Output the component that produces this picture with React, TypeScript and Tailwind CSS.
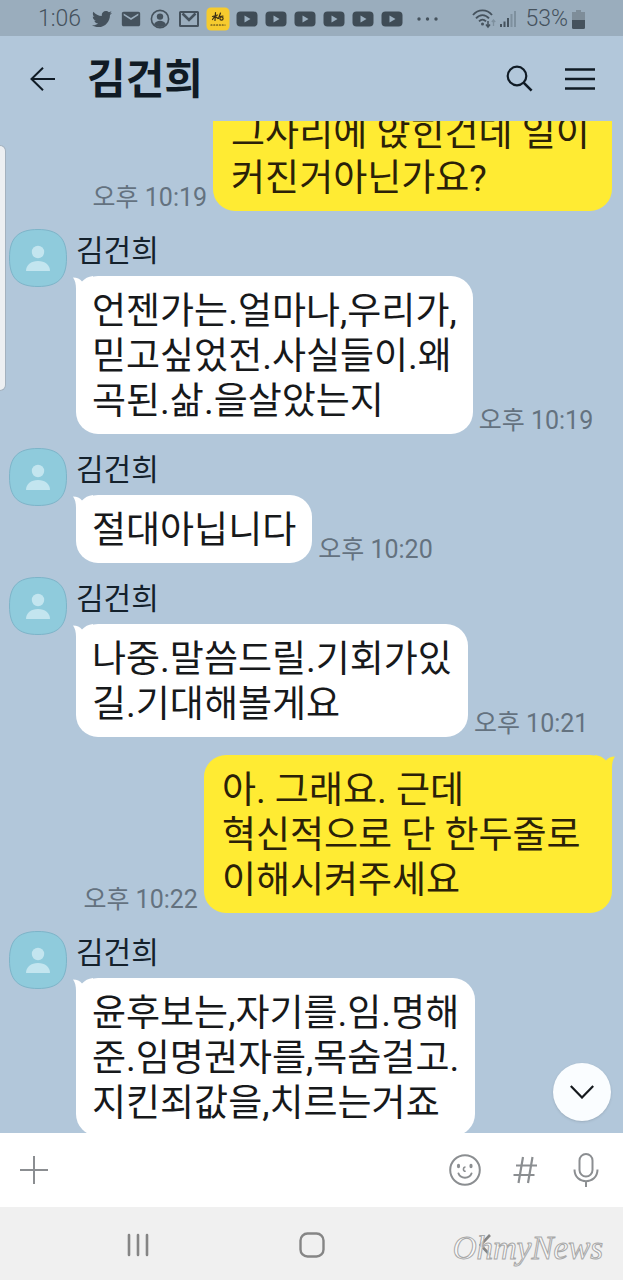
import type { ReactNode } from "react";
import { FaTwitter } from "react-icons/fa";
import { MdEmail } from "react-icons/md";

type Message = {
  mine?: boolean;
  text: string;
  time?: string;
};

const NAME = "김건희";

const messages: Message[] = [
  { mine: true, text: "그사리에 앉힌건데 일이 \n커진거아닌가요?", time: "오후 10:19" },
  { text: "언젠가는.얼마나,우리가,\n믿고싶었전.사실들이.왜\n곡된.삶.을살았는지", time: "오후 10:19" },
  { text: "절대아닙니다", time: "오후 10:20" },
  { text: "나중.말씀드릴.기회가있\n길.기대해볼게요", time: "오후 10:21" },
  { mine: true, text: "아. 그래요. 근데\n혁신적으로 단 한두줄로  \n이해시켜주세요", time: "오후 10:22" },
  { text: "윤후보는,자기를.임.명해\n준.임명권자를,목숨걸고.\n지킨죄값을,치르는거죠" },
];

function YoutubeIcon() {
  return (
    <svg viewBox="0 0 22 16" className="w-[22px] h-4">
      <rect x="0.5" y="0.5" width="21" height="15" rx="4" fill="#3f4c56" />
      <path d="M8.5 4.5l6 3.5-6 3.5z" fill="#9bafbf" />
    </svg>
  );
}

function Slot({ children }: { children: ReactNode }) {
  return <span className="flex w-[22px] shrink-0 items-center justify-center">{children}</span>;
}

function StatusBar() {
  return (
    <div className="flex h-9 shrink-0 items-center bg-[#9aadbd] px-[38px] pt-[2px] text-[#45525d]">
      <span className="w-[53px] shrink-0 text-[23px] leading-8 font-light">1:06</span>
      <div className="flex shrink-0 items-center gap-[7px]">
        <Slot><FaTwitter size={20} /></Slot>
        <Slot><MdEmail size={22} /></Slot>
        <Slot>
          <svg viewBox="0 0 20 20" className="size-5" fill="none">
            <circle cx="10" cy="10" r="8.6" stroke="currentColor" strokeWidth="1.6" />
            <circle cx="10" cy="7.6" r="3.2" fill="currentColor" />
            <path d="M4 15.5c1-2.6 3.4-3.7 6-3.7s5 1.1 6 3.7a8.4 8.4 0 0 1-12 0z" fill="currentColor" />
          </svg>
        </Slot>
        <Slot>
          <svg viewBox="0 0 20 16" className="h-4 w-5" fill="none" stroke="currentColor" strokeWidth="2">
            <rect x="1" y="1" width="18" height="14" rx="0.5" />
            <path d="M3.5 2.5l6.5 6.5 6.5-6.5" strokeWidth="2.6" />
          </svg>
        </Slot>
        <Slot>
          <svg viewBox="0 0 24 24" className="size-6 shrink-0" fill="none">
            <rect x="0.5" y="0.5" width="23" height="23" rx="4.5" fill="#f6cb2e" />
            <g stroke="#3b3016" strokeWidth="1.2" strokeLinecap="round">
              <path d="M6.5 9.5l5-1.5M9.5 5.5l-.5 8M9 9l-2.5 3.5M9.5 9.5l2.5 2" />
              <path d="M14.5 6l-2 5.5M14 9.5l3-.5" />
              <circle cx="15.5" cy="11.5" r="1.6" />
              <path d="M5 18h14" strokeDasharray="1 1.8" />
            </g>
          </svg>
        </Slot>
        {[0, 1, 2, 3, 4, 5].map((i) => (
          <Slot key={i}><YoutubeIcon /></Slot>
        ))}
      </div>
      <svg viewBox="0 0 22 4" className="ml-[14px] h-1 w-[22px] shrink-0" fill="currentColor">
        <circle cx="2" cy="2" r="1.7" />
        <circle cx="10.5" cy="2" r="1.7" />
        <circle cx="19" cy="2" r="1.7" />
      </svg>
      <div className="ml-auto flex items-center">
        <svg viewBox="0 0 24 20" className="h-5 w-6 shrink-0" fill="none" stroke="currentColor" strokeWidth="1.8">
          <path d="M1 6C6-0.3 15-0.3 20 6" />
          <path d="M4 9.3c3.8-4.3 9.2-4.3 13 0" />
          <path d="M7 12.4c2.3-2.4 4.7-2.4 7 0" />
          <circle cx="10.5" cy="15" r="1.5" fill="currentColor" stroke="none" />
          <path d="M16 12v6M14 15.5l2 2.5 2-2.5" strokeWidth="1.5" />
          <path d="M21.5 17v-6M19.8 13l1.7-2 1.7 2" stroke="#7e909e" strokeWidth="1.3" />
        </svg>
        <svg viewBox="0 0 17 18" className="ml-1 h-[18px] w-[17px] shrink-0">
          <path d="M0 14h2v3H0zM3.5 11.5h2V17h-2zM7 8h2v9H7z" fill="#45525d" />
          <path d="M10.5 4h2v13h-2zM14 1h2v16h-2z" fill="#7e909e" />
        </svg>
        <span className="ml-2 text-[23px] leading-8 font-light">53%</span>
        <svg viewBox="0 0 13 19" className="ml-1 h-[19px] w-[13px] shrink-0">
          <path d="M4 0h5v2h4v8H0V2h4z" fill="#7e8d99" />
          <path d="M0 10h13v7.5q0 1.5-1.5 1.5h-10Q0 19 0 17.5z" fill="#45525d" />
        </svg>
      </div>
    </div>
  );
}

function Header() {
  return (
    <header className="flex h-[85px] shrink-0 items-center pl-[30px] pr-7 text-[#101b25]">
      <button aria-label="뒤로">
        <svg viewBox="0 0 25 24" className="h-6 w-[25px]" fill="none" stroke="currentColor" strokeWidth="2">
          <path d="M25 12H1.5M13 0.8L1.5 12 13 23.2" />
        </svg>
      </button>
      <h1 className="ml-8 pt-[2px] text-[42px] leading-[50px] font-bold">{NAME}</h1>
      <button aria-label="검색" className="ml-auto">
        <svg viewBox="0 0 27 27" className="size-[27px]" fill="none" stroke="currentColor" strokeWidth="2.2">
          <circle cx="11" cy="11" r="9.3" />
          <path d="M17.6 17.6l8 8" strokeWidth="2.6" />
        </svg>
      </button>
      <button aria-label="메뉴" className="ml-8">
        <svg viewBox="0 0 30 24" className="h-6 w-[30px]" stroke="currentColor" strokeWidth="2.4">
          <path d="M0 2.5h30M0 12h30M0 21.5h30" />
        </svg>
      </button>
    </header>
  );
}

function Avatar() {
  return (
    <svg viewBox="0 0 58 58" className="size-[58px] shrink-0">
      <path
        d="M29 0.5C49 0.5 57.5 9 57.5 29S49 57.5 29 57.5 0.5 49 0.5 29 9 0.5 29 0.5z"
        fill="#8fcbdc"
        stroke="#7db4c8"
      />
      <circle cx="29" cy="23" r="6.2" fill="#c3e5ef" />
      <path d="M17 42c0-6 5-10 12-10s12 4 12 10z" fill="#c3e5ef" />
    </svg>
  );
}

function Bubble({ mine, text }: { mine?: boolean; text: string }) {
  return (
    <div
      className={
        mine
          ? "relative rounded-[22px] bg-[#ffeb33] pt-[13px] pr-[13px] pb-[10px] pl-[18px] text-[#2b2108]"
          : "relative rounded-[22px] bg-white px-4 pt-[13px] pb-[10px] text-[#17191b]"
      }
    >
      <svg
        viewBox="0 0 20 24"
        className={
          mine
            ? "absolute top-0 -right-[3px] h-6 w-5 -scale-x-100 text-[#ffeb33]"
            : "absolute top-0 -left-[3px] h-6 w-5 text-white"
        }
        fill="currentColor"
      >
        <path d="M0 1.5C4 1.5 7 3 9 5.5C12 2.5 15 0.5 20 0V24H3V13C3 8 2 4 0 1.5z" />
      </svg>
      <p className="relative whitespace-pre text-[37px] leading-[45px]">{text}</p>
    </div>
  );
}

function Time({ children }: { children: ReactNode }) {
  return <time className="shrink-0 text-[25px] leading-[26px] text-[#64727f]">{children}</time>;
}

function MessageRow({ message, turn }: { message: Message; turn: boolean }) {
  const gap = turn ? "mt-[18px]" : "mt-[14px]";

  if (message.mine) {
    return (
      <li className={`${gap} flex shrink-0 items-end justify-end gap-[6px] pr-[11px]`}>
        <Time>{message.time}</Time>
        <Bubble mine text={message.text} />
      </li>
    );
  }

  return (
    <li className={`${gap} flex shrink-0 gap-[9px] pl-[9px] last:-mb-[3px]`}>
      <Avatar />
      <div>
        <div className="h-[47px] text-[30px] leading-[44px] text-[#14212c]">{NAME}</div>
        <div className="flex items-end gap-[6px]">
          <Bubble text={message.text} />
          {message.time && <Time>{message.time}</Time>}
        </div>
      </div>
    </li>
  );
}

function InputBar() {
  return (
    <form className="flex h-[74px] shrink-0 items-center bg-white pl-5 pr-6 text-[#8b8e91]">
      <button type="button" aria-label="추가">
        <svg viewBox="0 0 28 28" className="size-7" stroke="currentColor" strokeWidth="2">
          <path d="M0 14h28M14 0v28" />
        </svg>
      </button>
      <input aria-label="메시지" className="mx-4 min-w-0 flex-1 text-[30px] text-[#17191b] outline-none" />
      <button type="button" aria-label="이모티콘">
        <svg viewBox="0 0 32 32" className="size-8" fill="none" stroke="currentColor" strokeWidth="2">
          <circle cx="16" cy="16" r="14.8" />
          <path d="M9.5 19.5c2 5.5 11 5.5 13 0" strokeLinecap="round" />
          <path d="M16.5 13c-2.5 0-3 4.5 0.2 4.3" strokeWidth="1.6" />
          <ellipse cx="9.5" cy="12" rx="1.6" ry="2.2" fill="currentColor" stroke="none" />
          <ellipse cx="22" cy="12" rx="1.6" ry="2.2" fill="currentColor" stroke="none" />
        </svg>
      </button>
      <button type="button" aria-label="샵검색" className="ml-8">
        <svg viewBox="0 0 24 28" className="h-7 w-6" fill="none" stroke="currentColor" strokeWidth="2.2">
          <path d="M10 1L5.5 27M19.5 1l-4.5 26M3 9.5h21M0.5 19h21" />
        </svg>
      </button>
      <button type="button" aria-label="음성 입력" className="ml-9">
        <svg viewBox="0 0 26 34" className="h-[34px] w-[26px]" fill="none" stroke="currentColor" strokeWidth="2">
          <rect x="6.5" y="1" width="13" height="22.5" rx="6.5" />
          <path d="M1.5 16.5C1.5 32 24.5 32 24.5 16.5M13 28v6" />
        </svg>
      </button>
    </form>
  );
}

function NavBar() {
  return (
    <nav className="relative grid h-[73px] shrink-0 grid-cols-[1fr_72px_1fr] items-center bg-[#f0f0f0] pt-[2px] text-[#858585]">
      <button aria-label="최근 앱" className="justify-self-center">
        <svg viewBox="0 0 22 24" className="h-6 w-[22px]" stroke="currentColor" strokeWidth="2.6" strokeLinecap="round">
          <path d="M2 2v20M11 2v20M20 2v20" />
        </svg>
      </button>
      <button aria-label="홈" className="justify-self-center">
        <svg viewBox="0 0 26 26" className="size-[26px]" fill="none" stroke="currentColor" strokeWidth="2.4">
          <rect x="1.5" y="1.5" width="23" height="23" rx="7" />
        </svg>
      </button>
      <button aria-label="이전" className="justify-self-center">
        <svg viewBox="0 0 12 22" className="h-[22px] w-3" fill="none" stroke="currentColor" strokeWidth="2.6">
          <path d="M11 1L1.5 11 11 21" />
        </svg>
      </button>
      <span className="absolute right-5 bottom-3 font-['Liberation_Serif',serif] text-[33px] leading-10 text-white/70 italic [-webkit-text-stroke:1px_#a8a8a8]">
        OhmyNews
      </span>
    </nav>
  );
}

export default function App() {
  return (
    <div className="flex h-screen flex-col bg-[#b2c7da] font-['Roboto','Noto_Sans_CJK_KR',sans-serif]">
      <StatusBar />
      <Header />
      <main className="relative min-h-0 flex-1">
        <ul className="flex h-full flex-col justify-end overflow-hidden">
          {messages.map((message, i) => (
            <MessageRow
              key={i}
              message={message}
              turn={i > 0 && !!messages[i - 1].mine !== !!message.mine}
            />
          ))}
        </ul>
        <div className="absolute top-6 left-0 h-[246px] w-[6px] rounded-r-md border border-l-0 border-[#a3b1be] bg-[#eceff2]" />
        <button
          aria-label="맨 아래로"
          className="absolute right-3 bottom-3 flex size-[58px] items-center justify-center rounded-full bg-[#fafdff] text-[#15191d] shadow-sm"
        >
          <svg viewBox="0 0 24 14" className="h-[14px] w-6" fill="none" stroke="currentColor" strokeWidth="2.2">
            <path d="M0.8 1L12 12.5 23.2 1" />
          </svg>
        </button>
      </main>
      <InputBar />
      <NavBar />
    </div>
  );
}
